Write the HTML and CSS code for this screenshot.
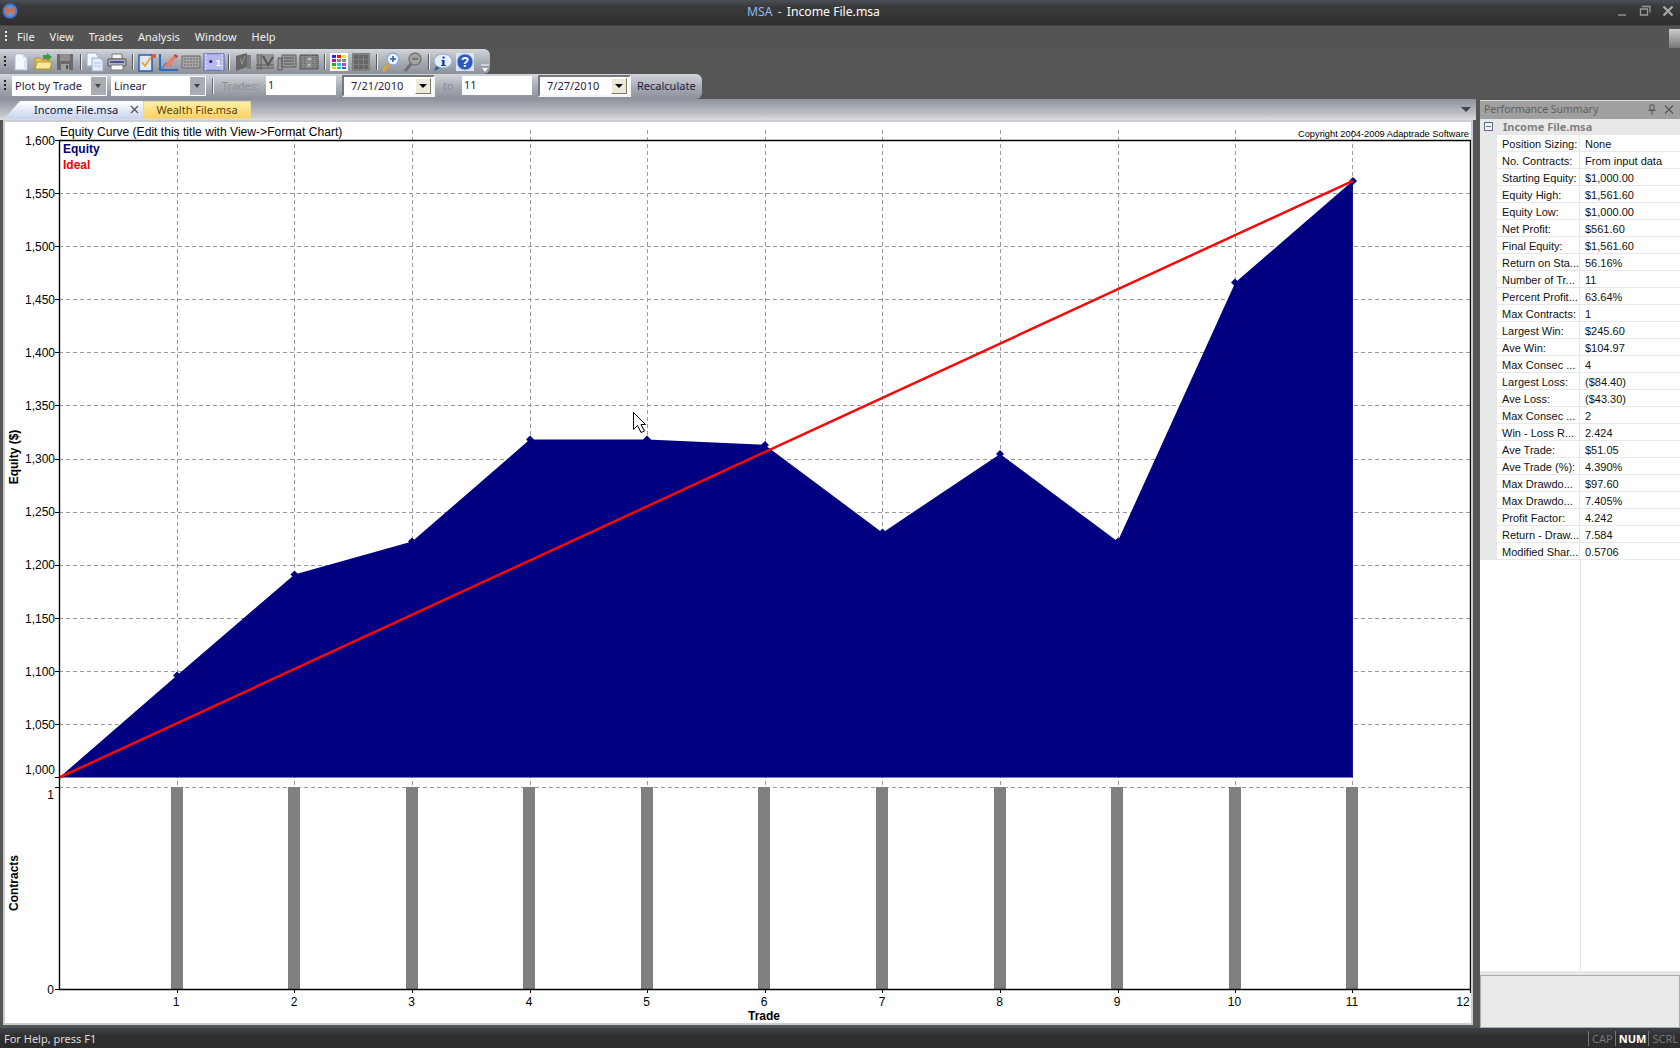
FILE: index.html
```html
<!DOCTYPE html>
<html>
<head>
    <title>MSA - Income File.msa</title>
    <link rel="stylesheet" href="styles.css">
</head>
<body>
    <div class="titlebar">
        <svg class="app-icon" width="16" height="16" viewBox="0 0 16 16">
            <circle cx="8" cy="8" r="7.5" fill="#3f78d8"/>
            <circle cx="8" cy="8" r="5.5" fill="#5f94e8"/>
            <path d="M3.5 12V4h2l2.5 4 2.5-4h2v8h-2V7.5L8 10.5 5.5 7.5V12z" fill="#f0661c"/>
        </svg>
        <div class="title"><span class="app-name">MSA</span> - <span class="doc-name">Income File.msa</span></div>
        <div class="window-btns">
            <svg width="14" height="14" viewBox="0 0 14 14"><path d="M3 10h8v2H3z" fill="#777"/></svg>
            <svg width="14" height="14" viewBox="0 0 14 14"><path d="M4 2.5h8v6M2.5 5h7v6h-7z" fill="none" stroke="#999" stroke-width="1.3"/></svg>
            <svg width="14" height="14" viewBox="0 0 14 14"><path d="M2.5 2.5l9 9M11.5 2.5l-9 9" stroke="#aaa" stroke-width="2.2"/></svg>
        </div>
    </div>

    <div class="menubar">
        <span class="grip"></span>
        <span class="menu-item">File</span>
        <span class="menu-item">View</span>
        <span class="menu-item">Trades</span>
        <span class="menu-item">Analysis</span>
        <span class="menu-item">Window</span>
        <span class="menu-item">Help</span>
        <span class="menu-stub"></span>
    </div>

    <div class="toolbars">
        <div class="toolbar toolbar-icons">
            <span class="grip grip-dark"></span>
            <svg class="tool" viewBox="0 0 20 20"><path d="M4 2h8l4 4v12H4z" fill="#f6faff" stroke="#a8bcd6"/><path d="M12 2v4h4z" fill="#cfe0f4"/><path d="M13 8h3v10h-3z" fill="#d8e6f6"/></svg>
            <svg class="tool" viewBox="0 0 20 20"><path d="M2 6h5l2 2h8v9H2z" fill="#e8c860" stroke="#b89030"/><path d="M4 10h15l-2 7H2z" fill="#fbe89a" stroke="#b89030"/><path d="M10 3h4V1l5 4-5 4V7h-4z" fill="#3f9a40"/></svg>
            <svg class="tool" viewBox="0 0 20 20"><path d="M2 2h16v16H2z" fill="#6a6a6a"/><path d="M5 2h10v7H5z" fill="#8f8f8f"/><path d="M6 12h8v6H6z" fill="#a0a0a0"/><path d="M11 13h2v4h-2z" fill="#555"/></svg>
            <span class="tool-sep"></span>
            <svg class="tool" viewBox="0 0 20 20"><path d="M2 1h8l3 3v10H2z" fill="#f4f8ff" stroke="#98aed0"/><path d="M7 6h8l3 3v10H7z" fill="#e2ecfa" stroke="#98aed0"/><path d="M9 11h7M9 14h7" stroke="#b4c8e4"/></svg>
            <svg class="tool" viewBox="0 0 20 20"><path d="M5 2h10v5H5z" fill="#f4f4f4" stroke="#777"/><path d="M1 7h18v7H1z" fill="#b4b4be" stroke="#555"/><path d="M3 9h14v2H3z" fill="#4a4f98"/><path d="M4 13h12v5H4z" fill="#fff" stroke="#777"/></svg>
            <span class="tool-sep"></span>
            <svg class="tool" viewBox="0 0 20 20"><path d="M2 3h13v16H2z" fill="#dfe9f8" stroke="#2c5cac" stroke-width="1.5"/><path d="M5 10l3 4 6-9" fill="none" stroke="#e8a820" stroke-width="1.6"/><path d="M15 2h4v4h-4z" fill="#d06060"/></svg>
            <svg class="tool" viewBox="0 0 20 20"><path d="M1 2v16h18" fill="none" stroke="#2c6cc0" stroke-width="2"/><path d="M2 18l5-7 5 3" fill="none" stroke="#2c6cc0"/><path d="M7 12l8-9 3 2-8 10-4 1z" fill="#e88070"/><path d="M16 2l3 2-1 2-3-2z" fill="#b84040"/></svg>
            <svg class="tool" viewBox="0 0 20 20"><path d="M1 4h18v12H1z" fill="#a6a6a6" stroke="#6a6a6a"/><path d="M3 7h14M3 10h14M3 13h14" stroke="#666" stroke-dasharray="2 1"/></svg>
            <svg class="tool tool-wide" viewBox="0 0 24 20"><path d="M1 1h22v18H1z" fill="#b8b8f0" stroke="#4a68b8"/><path d="M3 1v18M21 1v18" stroke="#fff" stroke-dasharray="2 2"/><path d="M7 8h3v3H7z" fill="#1c2c80"/><text x="14" y="14" class="tool-digit">1</text></svg>
            <span class="tool-sep"></span>
            <svg class="tool" viewBox="0 0 20 20"><path d="M3 4l11-3v14L3 19z" fill="#666"/><path d="M14 3h4v14h-4z" fill="#7c7c7c"/><path d="M7 6l2 6 3-8" fill="none" stroke="#9a9a9a"/></svg>
            <svg class="tool" viewBox="0 0 20 20"><path d="M1 2h18v16H1z" fill="#969696"/><path d="M3 2v16M6 2v16M1 16h18M1 13h18" stroke="#5c5c5c"/><path d="M8 4l5 9 5-8" fill="none" stroke="#555" stroke-width="2"/></svg>
            <svg class="tool" viewBox="0 0 20 20"><path d="M1 6h4v12h-4zM5 3h14v12H5z" fill="#979797" stroke="#5e5e5e"/><path d="M7 6h10M7 9h10M7 12h10" stroke="#555"/></svg>
            <svg class="tool" viewBox="0 0 20 20"><path d="M1 3h18v14H1z" fill="#8c8c8c" stroke="#555"/><path d="M3 3v14M6 3v14M14 3v14M17 3v14" stroke="#4c4c4c" stroke-dasharray="1 1"/><path d="M9 6h3v2H9zM9 12h2v2H9z" fill="#c4c4c4"/></svg>
            <span class="tool-sep"></span>
            <svg class="tool" viewBox="0 0 20 20"><path d="M1 1h18v18H1z" fill="#fff"/>
                <path d="M3 3h4v3H3z" fill="#2030d0"/><path d="M8 3h4v3H8z" fill="#e01818"/><path d="M13 3h4v3h-4z" fill="#f4e820"/>
                <path d="M3 7h4v3H3z" fill="#a02090"/><path d="M8 7h4v3H8z" fill="#888"/><path d="M13 7h4v3h-4z" fill="#888"/>
                <path d="M3 11h4v3H3z" fill="#20b020"/><path d="M8 11h4v3H8z" fill="#20c8e0"/><path d="M13 11h4v3h-4z" fill="#e030d0"/>
                <path d="M3 15h4v2H3z" fill="#d0d020"/><path d="M8 15h4v2H8z" fill="#20d060"/><path d="M13 15h4v2h-4z" fill="#3060e0"/></svg>
            <svg class="tool" viewBox="0 0 20 20"><path d="M1 1h18v18H1z" fill="#808080"/><path d="M3 3h4v4H3zM8 3h4v4H8zM13 3h4v4h-4zM3 8h4v4H3zM8 8h4v4H8zM13 8h4v4h-4zM3 13h4v4H3zM8 13h4v4H8zM13 13h4v4h-4z" fill="#666"/></svg>
            <span class="tool-sep"></span>
            <svg class="tool" viewBox="0 0 20 20"><path d="M2 19l6-7" stroke="#e8a030" stroke-width="3"/><circle cx="12" cy="7" r="6" fill="#eaf3ff" stroke="#8fa8d0" stroke-width="1.5"/><path d="M9 7h6M12 4v6" stroke="#2c5cb0" stroke-width="1.6"/></svg>
            <svg class="tool" viewBox="0 0 20 20"><path d="M2 19l6-7" stroke="#6e6e6e" stroke-width="3"/><circle cx="12" cy="7" r="6" fill="#a4a4a4" stroke="#777" stroke-width="1.5"/><path d="M9 7h6" stroke="#666" stroke-width="1.6"/></svg>
            <span class="tool-sep"></span>
            <svg class="tool" viewBox="0 0 20 20"><ellipse cx="10" cy="9" rx="9" ry="7" fill="#e4eefc" stroke="#8eaad6"/><path d="M3 14l-2 5 6-3z" fill="#2c5cb0"/><path d="M9 8h2.5v5H13v1H8v-1h1.2V9H8zM9.5 4.5h2v2h-2z" fill="#123a90"/></svg>
            <svg class="tool" viewBox="0 0 20 20"><path d="M1 1h18v18H1z" fill="#dde5f2"/><circle cx="10" cy="10" r="8" fill="#2c58c0" stroke="#a8c0ec"/><text x="10" y="15" class="tool-q">?</text></svg>
            <svg class="tool-more" viewBox="0 0 10 14"><path d="M1 5h8" stroke="#fff"/><path d="M2 8h6l-3 4z" fill="#fff"/></svg>
        </div>

        <div class="toolbar toolbar-form">
            <span class="grip grip-dark"></span>
            <div class="combo"><span class="combo-text">Plot by Trade</span><span class="combo-btn"></span></div>
            <div class="combo"><span class="combo-text">Linear</span><span class="combo-btn"></span></div>
            <span class="form-sep"></span>
            <span class="form-label">Trades:</span>
            <span class="field">1</span>
            <div class="date"><span>7/21/2010</span><span class="date-btn"></span></div>
            <span class="form-label label-to">to</span>
            <span class="field">11</span>
            <div class="date"><span>7/27/2010</span><span class="date-btn"></span></div>
            <span class="recalc">Recalculate</span>
        </div>
    </div>

    <div class="workspace">
        <div class="doc">
            <div class="tabstrip">
                <div class="tab tab-active">
                    <span>Income File.msa</span>
                    <svg class="tab-close" width="9" height="9" viewBox="0 0 9 9"><path d="M1 1l7 7M8 1l-7 7" stroke="#555" stroke-width="1.3"/></svg>
                </div>
                <div class="tab tab-other">Wealth File.msa</div>
                <span class="tab-menu"></span>
            </div>
            <div class="chart-frame">
                <svg class="chart" viewBox="5 122 1466 901" width="1466" height="901">
                    <g class="grid">
                        <path d="M59 193.5H1471M59 246.5H1471M59 299.5H1471M59 352.5H1471M59 405.5H1471M59 459.5H1471M59 512.5H1471M59 565.5H1471M59 618.5H1471M59 671.5H1471M59 724.5H1471M59 787.5H1471"/>
                        <path d="M177.5 130V787M294.5 130V787M412.5 130V787M530.5 130V787M647.5 130V787M765.5 130V787M882.5 130V787M1000.5 130V787M1118.5 130V787M1235.5 130V787M1352.5 130V787"/>
                    </g>

                    <path class="equity" d="M59.3 777.5L176.9 675.5L294.5 574.5L412.1 541.6L529.7 439.6L647.3 439.6L764.9 444.9L882.5 532.7L1000.1 453.9L1117.7 541.6L1235.3 282.4L1352.9 180.8V777.5z"/>
                    <path class="equity" d="M177 671.5l4 4-4 4-4-4zM294.5 570.5l4 4-4 4-4-4zM412 537.5l4 4-4 4-4-4zM530 435.5l4 4-4 4-4-4zM647 435.5l4 4-4 4-4-4zM765 441l4 4-4 4-4-4zM882.5 528.5l4 4-4 4-4-4zM1000 450l4 4-4 4-4-4zM1118 537.5l4 4-4 4-4-4zM1235 278.5l4 4-4 4-4-4zM1353 177l4 4-4 4-4-4z"/>
                    <path class="ideal" d="M59.3 777.5L1352.9 180.8"/>

                    <g class="bars">
                        <rect x="171" y="787" width="12" height="202"/><rect x="288" y="787" width="12" height="202"/>
                        <rect x="406" y="787" width="12" height="202"/><rect x="523" y="787" width="12" height="202"/>
                        <rect x="641" y="787" width="12" height="202"/><rect x="758" y="787" width="12" height="202"/>
                        <rect x="876" y="787" width="12" height="202"/><rect x="994" y="787" width="12" height="202"/>
                        <rect x="1111" y="787" width="12" height="202"/><rect x="1229" y="787" width="12" height="202"/>
                        <rect x="1346" y="787" width="12" height="202"/>
                    </g>

                    <path class="axis" d="M59.5 140.5H1470.5V989.5H59.5z"/>
                    <path class="ticks" d="M55 140.5H59M55 193.5H59M55 246.5H59M55 299.5H59M55 352.5H59M55 405.5H59M55 459.5H59M55 512.5H59M55 565.5H59M55 618.5H59M55 671.5H59M55 724.5H59M55 777.5H59M55 787.5H59M55 989.5H59M177.5 989V993M294.5 989V993M412.5 989V993M530.5 989V993M647.5 989V993M765.5 989V993M882.5 989V993M1000.5 989V993M1118.5 989V993M1235.5 989V993M1352.5 989V993M1470.5 989V993"/>

                    <text class="chart-title" x="60" y="136">Equity Curve (Edit this title with View-&gt;Format Chart)</text>
                    <text class="copyright" x="1469" y="137">Copyright 2004-2009 Adaptrade Software</text>
                    <text class="legend legend-equity" x="63" y="153">Equity</text>
                    <text class="legend legend-ideal" x="63" y="169">Ideal</text>

                    <g class="ylabels">
                        <text x="55" y="145">1,600</text><text x="55" y="198">1,550</text><text x="55" y="251">1,500</text>
                        <text x="55" y="304">1,450</text><text x="55" y="357">1,400</text><text x="55" y="410">1,350</text>
                        <text x="55" y="463">1,300</text><text x="55" y="516">1,250</text><text x="55" y="569">1,200</text>
                        <text x="55" y="623">1,150</text><text x="55" y="676">1,100</text><text x="55" y="729">1,050</text>
                        <text x="55" y="774">1,000</text><text x="54" y="799">1</text><text x="54" y="994">0</text>
                    </g>
                    <g class="xlabels">
                        <text x="176" y="1006">1</text><text x="294" y="1006">2</text><text x="411.5" y="1006">3</text>
                        <text x="529" y="1006">4</text><text x="646.5" y="1006">5</text><text x="764" y="1006">6</text>
                        <text x="882" y="1006">7</text><text x="999.5" y="1006">8</text><text x="1117" y="1006">9</text>
                        <text x="1234.5" y="1006">10</text><text x="1352" y="1006">11</text><text x="1463" y="1006">12</text>
                    </g>
                    <text class="axis-title" x="764" y="1020">Trade</text>
                    <text class="axis-title" transform="translate(18 457) rotate(-90)">Equity ($)</text>
                    <text class="axis-title" transform="translate(18 883) rotate(-90)">Contracts</text>

                    <path class="cursor" d="M633.5 412.5V429.5L637.5 425.5L641 432.5L644.5 431L641 424.5H645.5z"/>
                </svg>
            </div>
        </div>

        <div class="panel">
            <div class="panel-head">
                <span class="panel-title">Performance Summary</span>
                <svg width="10" height="11" viewBox="0 0 10 11"><path d="M3 1h4v5H3zM1.5 6.5h7M5 7v4" fill="none" stroke="#555"/></svg>
                <svg width="10" height="11" viewBox="0 0 10 11"><path d="M1 1.5l8 8M9 1.5l-8 8" stroke="#555" stroke-width="1.2"/></svg>
            </div>
            <div class="group-row">
                <span class="expander"></span>
                <span>Income File.msa</span>
            </div>
            <div class="grid-body">
                <div class="row"><span class="name">Position Sizing:</span><span class="value">None</span></div>
                <div class="row"><span class="name">No. Contracts:</span><span class="value">From input data</span></div>
                <div class="row"><span class="name">Starting Equity:</span><span class="value">$1,000.00</span></div>
                <div class="row"><span class="name">Equity High:</span><span class="value">$1,561.60</span></div>
                <div class="row"><span class="name">Equity Low:</span><span class="value">$1,000.00</span></div>
                <div class="row"><span class="name">Net Profit:</span><span class="value">$561.60</span></div>
                <div class="row"><span class="name">Final Equity:</span><span class="value">$1,561.60</span></div>
                <div class="row"><span class="name">Return on Sta...</span><span class="value">56.16%</span></div>
                <div class="row"><span class="name">Number of Tr...</span><span class="value">11</span></div>
                <div class="row"><span class="name">Percent Profit...</span><span class="value">63.64%</span></div>
                <div class="row"><span class="name">Max Contracts:</span><span class="value">1</span></div>
                <div class="row"><span class="name">Largest Win:</span><span class="value">$245.60</span></div>
                <div class="row"><span class="name">Ave Win:</span><span class="value">$104.97</span></div>
                <div class="row"><span class="name">Max Consec ...</span><span class="value">4</span></div>
                <div class="row"><span class="name">Largest Loss:</span><span class="value">($84.40)</span></div>
                <div class="row"><span class="name">Ave Loss:</span><span class="value">($43.30)</span></div>
                <div class="row"><span class="name">Max Consec ...</span><span class="value">2</span></div>
                <div class="row"><span class="name">Win - Loss R...</span><span class="value">2.424</span></div>
                <div class="row"><span class="name">Ave Trade:</span><span class="value">$51.05</span></div>
                <div class="row"><span class="name">Ave Trade (%):</span><span class="value">4.390%</span></div>
                <div class="row"><span class="name">Max Drawdo...</span><span class="value">$97.60</span></div>
                <div class="row"><span class="name">Max Drawdo...</span><span class="value">7.405%</span></div>
                <div class="row"><span class="name">Profit Factor:</span><span class="value">4.242</span></div>
                <div class="row"><span class="name">Return - Draw...</span><span class="value">7.584</span></div>
                <div class="row"><span class="name">Modified Shar...</span><span class="value">0.5706</span></div>
                <div class="grid-rest"></div>
            </div>
            <div class="desc-band"></div>
            <div class="desc-box"></div>
        </div>
    </div>

    <div class="statusbar">
        <span class="status-text">For Help, press F1</span>
        <span class="indicator">CAP</span>
        <span class="indicator indicator-on">NUM</span>
        <span class="indicator">SCRL</span>
    </div>
</body>
</html>
```

FILE: styles.css
```css
html, body {
    margin: 0;
    height: 100%;
}

body {
    width: 1680px;
    height: 1048px;
    display: flex;
    flex-direction: column;
    overflow: hidden;
    background-color: #555;
    font-family: "Noto Sans", sans-serif;
    font-size: 11px;
}

.titlebar {
    height: 22px;
    display: flex;
    align-items: center;
    padding: 0 0 3px 2px;
    background: linear-gradient(#4a4f58, #3a3a3a 25%, #2f2f2f);
    border-bottom: 1px solid #444;
    flex-shrink: 0;
}

.app-icon {
    flex-shrink: 0;
}

.title {
    margin-left: 729px;
    font-size: 12.2px;
    color: #c8d8f0;
    white-space: nowrap;
}

.app-name {
    color: #8fbbf0;
    margin-right: 2px;
}

.doc-name {
    color: #fff;
    margin-left: 2px;
}

.window-btns {
    margin-left: auto;
    display: flex;
    gap: 9px;
    padding-right: 5px;
}

.menubar {
    height: 21px;
    display: flex;
    align-items: center;
    background-color: #545454;
    padding: 0 0 2px 5px;
    flex-shrink: 0;
}

.grip {
    width: 2px;
    height: 12px;
    margin-right: 10px;
    background: repeating-linear-gradient(#eee 0 2px, transparent 2px 4px);
    flex-shrink: 0;
}

.grip-dark {
    background: repeating-linear-gradient(#222 0 2px, transparent 2px 4px);
    margin-right: 5px;
}

.menu-item {
    color: #f0f0f0;
    margin-right: 15px;
}

.menu-stub {
    margin-left: auto;
    width: 11px;
    height: 19px;
    margin-top: 3px;
    background: linear-gradient(#ccc, #777);
}

.toolbars {
    background-color: #555;
    height: 50px;
    flex-shrink: 0;
}

.toolbar {
    display: flex;
    align-items: center;
    background: linear-gradient(#d2d5da, #a9adb5 50%, #8b9099);
    border-radius: 0 6px 6px 0;
    padding-left: 4px;
    box-sizing: border-box;
}

.toolbar-icons {
    width: 490px;
    height: 25px;
}

.tool {
    width: 20px;
    height: 20px;
    margin-right: 2px;
    flex-shrink: 0;
}

.tool-wide {
    width: 22px;
    margin-right: 0;
}

.tool-digit {
    font-size: 10px;
    font-weight: bold;
    fill: #fff;
    font-family: "Liberation Sans", sans-serif;
}

.tool-q {
    font-size: 14px;
    font-weight: bold;
    fill: #fff;
    text-anchor: middle;
    font-family: "Liberation Sans", sans-serif;
}

.tool-sep {
    width: 2px;
    height: 16px;
    margin: 0 3px;
    background-color: #555;
    border-right: 1px solid #eee;
    box-sizing: border-box;
    flex-shrink: 0;
}

.tool-more {
    width: 10px;
    height: 14px;
    margin: 10px 0 0 auto;
}

.toolbar-form {
    width: 702px;
    height: 25px;
    padding-bottom: 2px;
    color: #2a1c40;
}

.toolbar-form .grip {
    margin-right: 6px;
}

.combo {
    width: 95px;
    height: 20px;
    margin-right: 4px;
    display: flex;
    align-items: center;
    background-color: #fff;
    flex-shrink: 0;
}

.combo-text {
    flex: 1;
    padding-left: 3px;
}

.combo-btn {
    width: 15px;
    height: 18px;
    background-color: #a9adb3;
    border: 1px solid #fff;
    position: relative;
}

.combo-btn::after {
    content: "";
    position: absolute;
    left: 4px;
    top: 7px;
    border: 3px solid transparent;
    border-top: 4px solid #444;
}

.form-sep {
    width: 2px;
    height: 16px;
    margin: 0 8px 0 2px;
    background-color: #666;
    border-right: 1px solid #eee;
    box-sizing: border-box;
}

.form-label {
    width: 44px;
    color: #8b8e95;
}

.label-to {
    width: 19px;
    margin-left: 8px;
}

.field {
    width: 70px;
    height: 19px;
    line-height: 18px;
    padding-left: 2px;
    background-color: #fff;
    box-sizing: border-box;
    flex-shrink: 0;
}

.date {
    width: 93px;
    height: 22px;
    margin-left: 6px;
    display: flex;
    align-items: center;
    justify-content: space-between;
    padding: 0 2px 0 7px;
    box-sizing: border-box;
    background-color: #fff;
    border: 2px solid;
    border-color: #777 #f4f4f4 #f4f4f4 #777;
    flex-shrink: 0;
}

.date-btn {
    width: 16px;
    height: 16px;
    background-color: #ece9d8;
    border: 1px solid;
    border-color: #fff #7a7660 #7a7660 #fff;
    box-sizing: border-box;
    position: relative;
}

.date-btn::after {
    content: "";
    position: absolute;
    left: 3px;
    top: 5px;
    border: 4px solid transparent;
    border-top: 4px solid #000;
}

.recalc {
    margin-left: 6px;
    font-size: 11px;
}

.workspace {
    flex: 1;
    display: flex;
    min-height: 0;
}

.doc {
    width: 1476px;
    display: flex;
    flex-direction: column;
    flex-shrink: 0;
}

.tabstrip {
    height: 21px;
    display: flex;
    align-items: flex-end;
    padding: 0 0 1px 4px;
    box-sizing: border-box;
    background: linear-gradient(#8d939d, #bdc0c6 70%, #dcdde0);
    position: relative;
    flex-shrink: 0;
}

.tab {
    height: 18px;
    padding-bottom: 2px;
    box-sizing: border-box;
    display: flex;
    align-items: center;
}

.tab-active {
    width: 139px;
    padding-left: 30px;
    color: #12183a;
    background: linear-gradient(#fff, #c6d2ee);
    clip-path: polygon(0 100%, 16px 0, 100% 0, 100% 100%);
}

.tab-close {
    margin-left: 12px;
}

.tab-other {
    width: 108px;
    justify-content: center;
    color: #5a4410;
    background: linear-gradient(#fff1a8, #f9cf62);
    border-radius: 2px 2px 0 0;
    box-shadow: inset 0 0 0 1px #e8d8a0;
}

.tab-menu {
    position: absolute;
    right: 5px;
    top: 8px;
    border: 5px solid transparent;
    border-top: 5px solid #444;
}

.chart-frame {
    flex: 1;
    margin: 0 3px 3px 3px;
    box-sizing: border-box;
    background-color: #fff;
    border: 2px solid #c9cdd4;
    min-height: 0;
}

.chart {
    display: block;
    font-family: "Liberation Sans", sans-serif;
    font-size: 12px;
}

.grid path {
    fill: none;
    stroke: #999;
    stroke-dasharray: 4 3;
}

.equity {
    fill: #000080;
}

.ideal {
    fill: none;
    stroke: #f80808;
    stroke-width: 2.5;
}

.bars {
    fill: #808080;
}

.axis {
    fill: none;
    stroke: #000;
    stroke-width: 1.4;
}

.ticks {
    fill: none;
    stroke: #000;
}

.chart-title {
    font-size: 12.1px;
}

.copyright {
    font-size: 9.3px;
    text-anchor: end;
}

.legend {
    font-weight: bold;
    font-size: 12px;
}

.legend-equity {
    fill: #000080;
}

.legend-ideal {
    fill: #f00000;
}

.ylabels text {
    text-anchor: end;
}

.xlabels text {
    text-anchor: middle;
}

.axis-title {
    font-weight: bold;
    text-anchor: middle;
}

.cursor {
    fill: #fff;
    stroke: #000;
}

.panel {
    width: 200px;
    margin-left: 4px;
    margin-top: 1px;
    display: flex;
    flex-direction: column;
    background-color: #fff;
    flex-shrink: 0;
    min-height: 0;
}

.panel-head {
    height: 19px;
    display: flex;
    align-items: center;
    gap: 7px;
    padding: 0 6px 2px 4px;
    box-sizing: border-box;
    background-color: #a0a0a0;
    border-top: 1px solid #ddd;
    color: #5e5e5e;
    font-size: 10.5px;
    flex-shrink: 0;
}

.panel-title {
    flex: 1;
}

.group-row {
    height: 16px;
    padding-bottom: 1px;
    box-sizing: border-box;
    display: flex;
    align-items: center;
    background-color: #e8e8e8;
    color: #808080;
    font-weight: bold;
    flex-shrink: 0;
}

.expander {
    width: 7px;
    height: 7px;
    margin: 0 10px 0 4px;
    border: 1px solid #5a6a8a;
    background: linear-gradient(#5a6a8a, #5a6a8a) center / 5px 1px no-repeat #f4f4f4;
}

.grid-body {
    flex: 1;
    display: flex;
    flex-direction: column;
    min-height: 0;
    font-family: "Liberation Sans", sans-serif;
}

.row {
    height: 17px;
    display: flex;
    align-items: center;
    box-sizing: border-box;
    border-bottom: 1px solid #e8e8e8;
    background: linear-gradient(#e8e8e8, #e8e8e8) left / 17px 100% no-repeat;
    color: #111;
    flex-shrink: 0;
}

.name {
    width: 83px;
    margin-left: 17px;
    padding: 1px 0 0 5px;
    box-sizing: border-box;
    white-space: nowrap;
    overflow: hidden;
    height: 16px;
    line-height: 16px;
    border-right: 1px solid #e8e8e8;
}

.value {
    padding: 1px 0 0 5px;
}

.grid-rest {
    flex: 1;
    margin-left: 100px;
    border-left: 1px solid #e8e8e8;
}

.desc-band {
    height: 4px;
    background-color: #e8e8e8;
    flex-shrink: 0;
}

.desc-box {
    height: 53px;
    box-sizing: border-box;
    background-color: #ebebeb;
    border: 1px solid #aaa;
    flex-shrink: 0;
}

.statusbar {
    height: 20px;
    display: flex;
    align-items: center;
    background: linear-gradient(#3d424b, #2f2f2f 40%, #2c2c2c);
    color: #ddd;
    padding-left: 4px;
    flex-shrink: 0;
}

.status-text {
    margin-right: auto;
}

.indicator {
    padding: 0 2px 0 3px;
    border-left: 1px solid #777;
    color: #777;
}

.indicator-on {
    color: #fff;
    font-weight: bold;
}
```
